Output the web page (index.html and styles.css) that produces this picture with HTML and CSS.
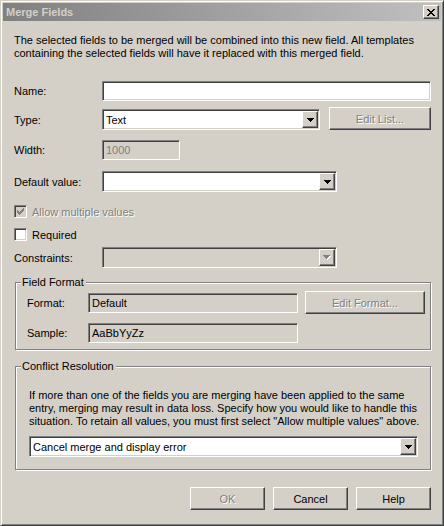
FILE: index.html
```html
<!DOCTYPE html>
<html lang="en">
<head>
    <meta charset="UTF-8">
    <title>Merge Fields</title>
    <link rel="stylesheet" href="styles.css">
</head>
<body>
    <div class="window">
        <!-- Title bar (inactive) -->
        <div class="titlebar">
            <span class="title">Merge Fields</span>
            <span class="btn close">
                <svg width="8" height="7" viewBox="0 0 8 7"><path d="M0 0h2v1h-2z M6 0h2v1h-2z M1 1h2v1h-2z M5 1h2v1h-2z M2 2h4v1h-4z M3 3h2v1h-2z M2 4h4v1h-4z M1 5h2v1h-2z M5 5h2v1h-2z M0 6h2v1h-2z M6 6h2v1h-2z" fill="#000"/></svg>
            </span>
        </div>

        <div class="client">
            <p class="intro">The selected fields to be merged will be combined into this new field. All templates<br>containing the selected fields will have it replaced with this merged field.</p>

            <div class="row row-name">
                <span class="label">Name:</span>
                <span class="field grow"></span>
            </div>

            <div class="row row-type">
                <span class="label">Type:</span>
                <span class="field combo combo-type">
                    <span class="combo-text">Text</span>
                    <span class="btn drop">
                        <svg width="7" height="4" viewBox="0 0 7 4"><path d="M0 0h7v1h-7z M1 1h5v1h-5z M2 2h3v1h-3z M3 3h1v1h-1z" fill="#000"/></svg>
                    </span>
                </span>
                <span class="btn push edit-list disabled">Edit List...</span>
            </div>

            <div class="row row-width">
                <span class="label">Width:</span>
                <span class="field off width-box">1000</span>
            </div>

            <div class="row row-default">
                <span class="label">Default value:</span>
                <span class="field combo combo-std">
                    <span class="combo-text"></span>
                    <span class="btn drop">
                        <svg width="7" height="4" viewBox="0 0 7 4"><path d="M0 0h7v1h-7z M1 1h5v1h-5z M2 2h3v1h-3z M3 3h1v1h-1z" fill="#000"/></svg>
                    </span>
                </span>
            </div>

            <div class="check-row row-allow">
                <span class="checkbox off">
                    <svg width="7" height="7" viewBox="0 0 7 7"><path d="M0 2h1v3h-1z M1 3h1v3h-1z M2 4h1v3h-1z M3 3h1v3h-1z M4 2h1v3h-1z M5 1h1v3h-1z M6 0h1v3h-1z" fill="#808080"/></svg>
                </span>
                <span class="check-label disabled">Allow multiple values</span>
            </div>

            <div class="check-row row-required">
                <span class="checkbox"></span>
                <span class="check-label">Required</span>
            </div>

            <div class="row row-constraints">
                <span class="label">Constraints:</span>
                <span class="field combo combo-std off">
                    <span class="combo-text"></span>
                    <span class="btn drop">
                        <svg width="8" height="5" viewBox="0 0 8 5"><path d="M1 1h7v1h-7z M2 2h5v1h-5z M3 3h3v1h-3z M4 4h1v1h-1z" fill="#fff"/><path d="M0 0h7v1h-7z M1 1h5v1h-5z M2 2h3v1h-3z M3 3h1v1h-1z" fill="#808080"/></svg>
                    </span>
                </span>
            </div>

            <!-- Field Format group -->
            <div class="group group-format">
                <span class="group-title">Field Format</span>
                <div class="row row-format">
                    <span class="label small">Format:</span>
                    <span class="field off read">Default</span>
                    <span class="btn push edit-format disabled">Edit Format...</span>
                </div>
                <div class="row row-sample">
                    <span class="label small">Sample:</span>
                    <span class="field off read">AaBbYyZz</span>
                </div>
            </div>

            <!-- Conflict Resolution group -->
            <div class="group group-conflict">
                <span class="group-title">Conflict Resolution</span>
                <p class="conflict-text">If more than one of the fields you are merging have been applied to the same<br>entry, merging may result in data loss. Specify how you would like to handle this<br>situation. To retain all values, you must first select "Allow multiple values" above.</p>
                <span class="field combo combo-conflict">
                    <span class="combo-text">Cancel merge and display error</span>
                    <span class="btn drop">
                        <svg width="7" height="4" viewBox="0 0 7 4"><path d="M0 0h7v1h-7z M1 1h5v1h-5z M2 2h3v1h-3z M3 3h1v1h-1z" fill="#000"/></svg>
                    </span>
                </span>
            </div>

            <div class="buttons">
                <span class="btn push dlg disabled">OK</span>
                <span class="btn push dlg">Cancel</span>
                <span class="btn push dlg">Help</span>
            </div>
        </div>
    </div>
</body>
</html>
```

FILE: styles.css
```css
body { margin: 0; background: #d4d0c8; font-family: "Liberation Sans", Arial, sans-serif; font-size: 11px; color: #000; }
.window { width: 444px; height: 526px; box-sizing: border-box; background: #d4d0c8; border: 1px solid; border-color: #d4d0c8 #404040 #404040 #d4d0c8; box-shadow: inset 1px 1px #fff, inset -1px -1px #808080; padding: 2px; }

/* title bar */
.titlebar { height: 18px; display: flex; align-items: center; justify-content: space-between; padding: 0 2px 0 3px; background: linear-gradient(to right, #808080, #c0c0c0); margin-bottom: 1px; }
.title { font-weight: bold; color: #d4d0c8; }
.close { width: 16px; height: 14px; display: flex; align-items: center; justify-content: center; box-sizing: border-box; }

/* 3d borders */
.btn { background: #d4d0c8; border: 1px solid; border-color: #fff #404040 #404040 #fff; box-shadow: inset -1px -1px #808080, inset 1px 1px #d4d0c8; box-sizing: border-box; }
.field { background: #fff; border: 1px solid; border-color: #808080 #fff #fff #808080; box-shadow: inset 1px 1px #404040, inset -1px -1px #d4d0c8; box-sizing: border-box; height: 20px; display: flex; align-items: center; padding: 0 3px; }
.field.off { background: #d4d0c8; }
.disabled { color: #808080; text-shadow: 1px 1px #fff; }

.client { padding: 0 10px 0 11px; }
.intro { margin: 13px 0 0; line-height: 13px; white-space: nowrap; }

.row { display: flex; align-items: center; }
.label { width: 88px; flex: none; }
.label.small { width: 61px; }
.grow { flex: 1; }

.row-name { margin-top: 21px; height: 20px; }
.row-type { margin-top: 8px; height: 21px; align-items: flex-end; }
.row-type .label { align-self: center; }
.row-width { margin-top: 10px; height: 20px; }
.row-default { margin-top: 11px; height: 21px; }
.row-constraints { margin-top: 6px; height: 21px; }

.width-box { width: 78px; color: #808080; }

/* combo box */
.combo { height: 21px; padding: 1px; }
.combo-text { flex: 1; padding-left: 2px; }
.drop { width: 16px; height: 17px; display: flex; align-items: center; justify-content: center; flex: none; }
.combo-type { width: 218px; }
.combo-std { width: 235px; }
.combo-conflict { width: 389px; margin-top: 8px; }

/* push buttons */
.push { height: 23px; display: flex; align-items: center; justify-content: center; }
.edit-list { width: 102px; margin-left: 9px; }
.edit-format { width: 120px; margin-left: 7px; }

/* check boxes */
.check-row { display: flex; align-items: center; height: 13px; }
.row-allow { margin-top: 13px; }
.row-required { margin-top: 10px; }
.checkbox { width: 13px; height: 13px; box-sizing: border-box; background: #fff; border: 1px solid; border-color: #808080 #fff #fff #808080; box-shadow: inset 1px 1px #404040, inset -1px -1px #d4d0c8; display: flex; align-items: center; justify-content: center; }
.checkbox.off { background: #d4d0c8; }
.check-label { margin-left: 5px; }

/* group boxes */
.group { position: relative; margin-left: 1px; border: 1px solid #808080; box-shadow: inset 1px 1px #fff, 1px 1px #fff; }
.group-title { position: absolute; top: -7px; left: 5px; padding: 0 2px 0 1px; line-height: 13px; background: #d4d0c8; }
.group-format { margin-top: 14px; padding: 8px 5px 6px 11px; }
.row-format { height: 23px; }
.row-sample { height: 20px; margin-top: 9px; }
.read { width: 210px; }
.group-conflict { margin-top: 16px; padding: 22px 12px 12px 13px; }
.conflict-text { margin: 0; line-height: 13px; white-space: nowrap; }

/* dialog buttons */
.buttons { display: flex; justify-content: flex-end; gap: 8px; margin-top: 17px; }
.dlg { width: 75px; }
```
